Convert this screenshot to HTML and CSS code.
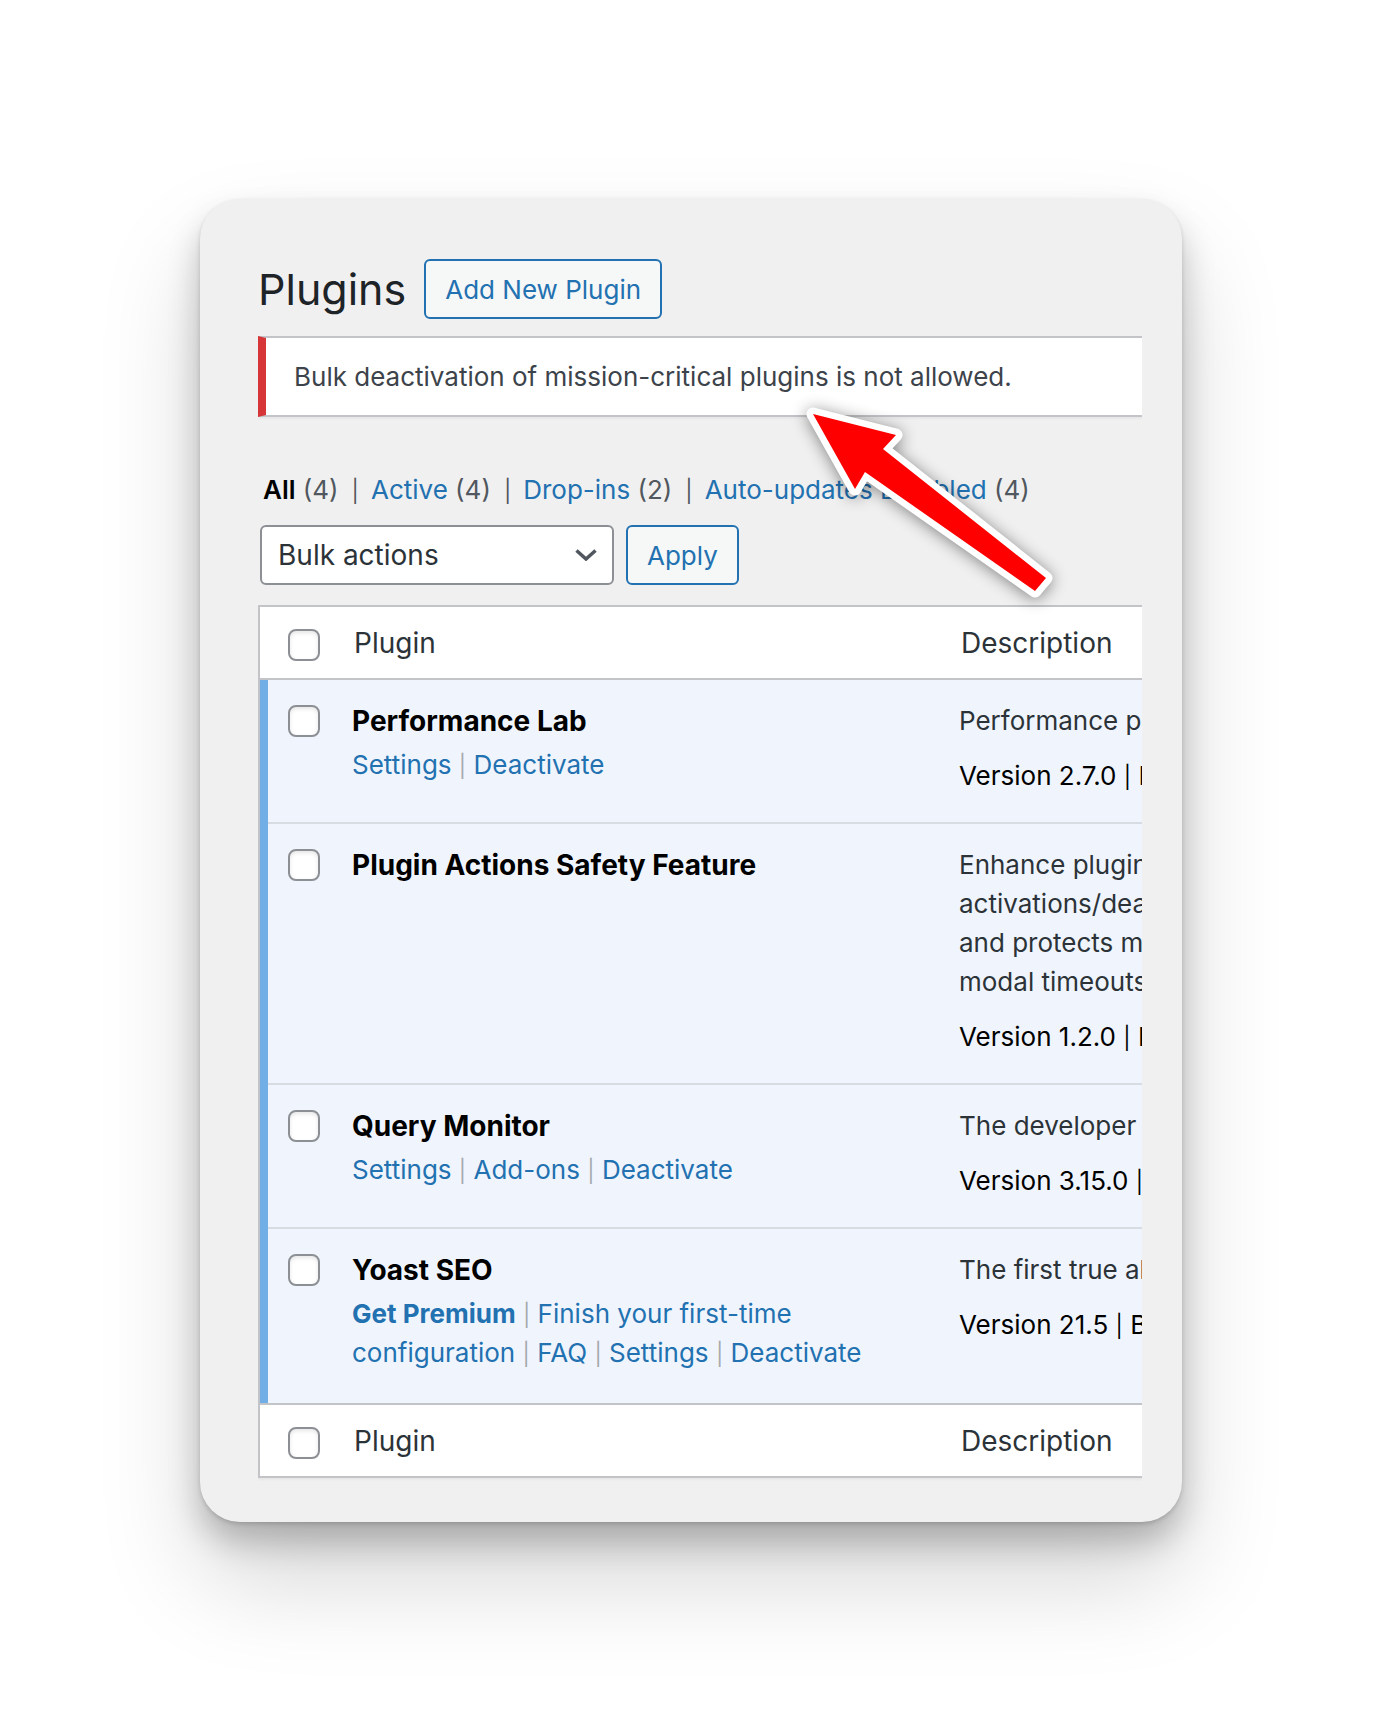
FILE: index.html
```html
<!DOCTYPE html>
<html lang="en">
<head>
<meta charset="utf-8">
<meta name="viewport" content="width=device-width, initial-scale=1">
<title>Plugins</title>
<link rel="stylesheet" href="styles.css">
</head>
<body>
<main class="card">
  <header class="heading">
    <h1 class="title">Plugins</h1>
    <button class="button" type="button">Add New Plugin</button>
  </header>
  <div class="clip">
    <p class="notice" role="alert">Bulk deactivation of mission-critical plugins is not allowed.</p>
  </div>
  <ul class="filters">
    <li><a class="current" href="#all">All</a> (4)</li>
    <li><a href="#active">Active</a> (4)</li>
    <li><a href="#drop-ins">Drop-ins</a> (2)</li>
    <li><a href="#auto-updates">Auto-updates Disabled</a> (4)</li>
  </ul>
  <form class="bulk">
    <div class="select-wrap">
      <select class="select" aria-label="Bulk actions">
        <option>Bulk actions</option>
      </select>
      <svg class="chevron" viewBox="0 0 22 12" aria-hidden="true"><path d="M1.500 1.500L11 10L20.500 1.500" fill="none" stroke="#50575e" stroke-width="3.500"/></svg>
    </div>
    <button class="button" type="button">Apply</button>
  </form>
  <div class="clip">
    <table class="plugins">
      <thead>
        <tr>
          <th class="check"><input type="checkbox" aria-label="Select all"></th>
          <th class="name" scope="col">Plugin</th>
          <th class="desc" scope="col">Description</th>
        </tr>
      </thead>
      <tbody>
        <tr>
          <td class="check"><input type="checkbox" aria-label="Select Performance Lab"></td>
          <td class="name">
            <strong class="plugin">Performance Lab</strong>
            <p class="actions"><a href="#s1">Settings</a> <span class="sep">|</span> <a href="#d1">Deactivate</a></p>
          </td>
          <td class="desc">
            <p>Performance plugin</p>
            <p class="version">Version 2.7.0 <span class="sep">|</span> By</p>
          </td>
        </tr>
        <tr>
          <td class="check"><input type="checkbox" aria-label="Select Plugin Actions Safety Feature"></td>
          <td class="name"><strong class="plugin">Plugin Actions Safety Feature</strong></td>
          <td class="desc">
            <p>Enhance plugin<br>activations/deactivations<br>and protects mission<br>modal timeouts</p>
            <p class="version">Version 1.2.0 <span class="sep">|</span> By</p>
          </td>
        </tr>
        <tr>
          <td class="check"><input type="checkbox" aria-label="Select Query Monitor"></td>
          <td class="name">
            <strong class="plugin">Query Monitor</strong>
            <p class="actions"><a href="#s3">Settings</a> <span class="sep">|</span> <a href="#a3">Add-ons</a> <span class="sep">|</span> <a href="#d3">Deactivate</a></p>
          </td>
          <td class="desc">
            <p>The developer</p>
            <p class="version">Version 3.15.0 <span class="sep">|</span> By</p>
          </td>
        </tr>
        <tr>
          <td class="check"><input type="checkbox" aria-label="Select Yoast SEO"></td>
          <td class="name">
            <strong class="plugin">Yoast SEO</strong>
            <p class="actions"><a class="premium" href="#p4">Get Premium</a> <span class="sep">|</span> <a href="#c4">Finish your first-time configuration</a> <span class="sep">|</span> <a href="#f4">FAQ</a> <span class="sep">|</span> <a href="#s4">Settings</a> <span class="sep">|</span> <a href="#d4">Deactivate</a></p>
          </td>
          <td class="desc">
            <p>The first true all</p>
            <p class="version">Version 21.5 <span class="sep">|</span> By</p>
          </td>
        </tr>
      </tbody>
      <tfoot>
        <tr>
          <th class="check"><input type="checkbox" aria-label="Select all"></th>
          <th class="name" scope="col">Plugin</th>
          <th class="desc" scope="col">Description</th>
        </tr>
      </tfoot>
    </table>
  </div>
  <svg class="arrow" viewBox="0 0 260 204" aria-hidden="true">
    <path d="M13 14L96 35L83 49L246 178L235 191L65 72L55 89Z" fill="#f00" stroke="#fff" stroke-width="13" stroke-linejoin="round" paint-order="stroke"/>
  </svg>
</main>
</body>
</html>
```
FILE: styles.css
```css
* {
  box-sizing: border-box;
}

body {
  margin: 0;
  padding: 199px 200px 200px;
  background: #fff;
  color: #2c3338;
  font-family: Inter, "Liberation Sans", sans-serif;
  font-size: 26px;
  line-height: 39px;
}

p,
h1,
ul {
  margin: 0;
  padding: 0;
}

a {
  color: #2271b1;
  text-decoration: none;
}

.card {
  position: relative;
  padding: 60px 40px 40px 58px;
  border-radius: 40px;
  background: #f0f0f0;
  box-shadow:
    0 2px 4px rgba(0, 0, 0, 0.15),
    0 20px 32px rgba(0, 0, 0, 0.22),
    0 56px 100px rgba(0, 0, 0, 0.17);
}

.heading {
  display: flex;
  align-items: center;
  gap: 18px;
  margin-bottom: 17px;
}

.title {
  color: #1d2327;
  font-size: 43px;
  font-weight: 400;
  line-height: 60px;
}

.button {
  height: 60px;
  padding: 0 19px;
  border: 2px solid #2271b1;
  border-radius: 6px;
  background: #f6f7f7;
  color: #2271b1;
  font: inherit;
}

.clip {
  overflow: hidden;
  padding-bottom: 4px;
}

.notice {
  padding: 19px 28px;
  border: 2px solid #c3c4c7;
  border-left: 8px solid #d63638;
  border-right: 0;
  background: #fff;
  box-shadow: 0 2px 2px rgba(0, 0, 0, 0.04);
  color: #3c434a;
}

.filters {
  display: flex;
  margin: 49px 0 16px 5px;
  color: #50575e;
  list-style: none;
  white-space: nowrap;
}

.filters li + li::before {
  content: "|";
  margin: 0 12px 0 13px;
}

.sep,
.filters li + li::before {
  font-size: 22px;
  line-height: 1;
}

.filters .current {
  color: #000;
  font-weight: 600;
}

.bulk {
  display: flex;
  gap: 12px;
  margin: 0 0 20px 2px;
}

.select-wrap {
  display: grid;
  flex: 0 1 354px;
  align-items: center;
}

.select,
.chevron {
  grid-area: 1 / 1;
}

.select {
  width: 100%;
  height: 60px;
  padding: 0 48px 0 16px;
  border: 2px solid #8c8f94;
  border-radius: 6px;
  appearance: none;
  background: #fff;
  color: #2c3338;
  font: inherit;
  font-size: 28px;
}

.chevron {
  justify-self: end;
  width: 22px;
  height: 12px;
  margin-right: 17px;
  pointer-events: none;
}

.plugins {
  width: 100%;
  border: 2px solid #c3c4c7;
  border-right: 0;
  border-spacing: 0;
  table-layout: fixed;
  background: #fff;
  box-shadow: 0 2px 2px rgba(0, 0, 0, 0.04);
  text-align: left;
}

.plugins th,
.plugins td {
  padding: 0;
  overflow: hidden;
  font-weight: 400;
  vertical-align: top;
}

.plugins th {
  height: 73px;
  padding: 17px 0 15px 2px;
  border-bottom: 2px solid #c3c4c7;
  font-size: 28px;
}

.plugins tfoot th {
  border-top: 2px solid #c3c4c7;
  border-bottom: 0;
}

.plugins td {
  padding: 22px 0 28px;
  background: #f0f5fd;
  box-shadow: inset 0 -2px 0 rgba(0, 0, 0, 0.1);
}

.plugins tbody tr:last-child td {
  box-shadow: none;
}

.plugins .check {
  width: 92px;
  padding-left: 28px;
}

.plugins td.check {
  padding-left: 20px;
  border-left: 8px solid #72aee6;
}

.plugins .name {
  width: 607px;
}

.plugins .desc {
  white-space: nowrap;
}

.plugins td.desc {
  padding: 21px 0 29px;
}

.plugins td.name {
  padding-right: 80px;
}

.check input {
  display: block;
  width: 32px;
  height: 32px;
  margin: 3px 0 0;
  border: 2px solid #8c8f94;
  border-radius: 8px;
  appearance: none;
  background: #fff;
  box-shadow: inset 0 2px 4px rgba(0, 0, 0, 0.1);
}

.plugins th.check input {
  margin-top: 5px;
}

.plugin {
  display: block;
  color: #000;
  font-size: 28px;
  font-weight: 650;
}

.actions {
  padding: 4px 0 3px;
  color: #a7aaad;
}

.premium {
  font-weight: 700;
}

.version {
  margin-top: 16px;
  color: #000;
}

.arrow {
  position: absolute;
  top: 201px;
  left: 600px;
  width: 260px;
  height: 204px;
  overflow: visible;
  filter: drop-shadow(0 2px 8px rgba(0, 0, 0, 0.45));
  pointer-events: none;
}
```
